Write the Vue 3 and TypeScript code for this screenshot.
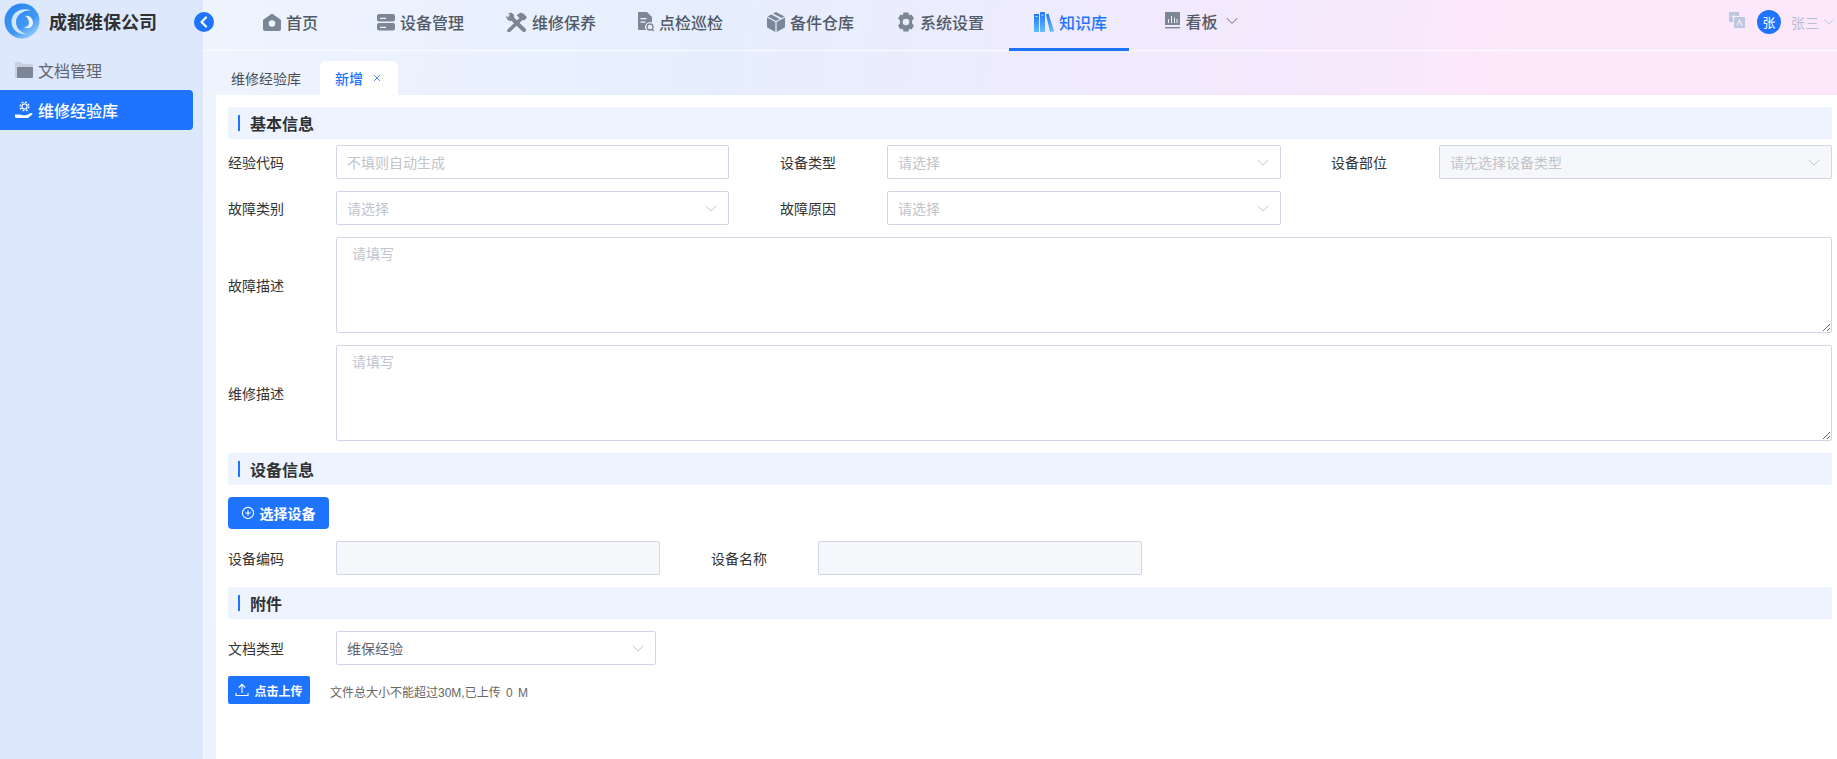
<script setup lang="ts">
interface NavItem { label: string; icon: string; active?: boolean; caret?: boolean }
const navItems: NavItem[] = [
  { label: '首页', icon: 'home' },
  { label: '设备管理', icon: 'server' },
  { label: '维修保养', icon: 'tools' },
  { label: '点检巡检', icon: 'doc' },
  { label: '备件仓库', icon: 'box' },
  { label: '系统设置', icon: 'gear' },
  { label: '知识库', icon: 'books', active: true },
  { label: '看板', icon: 'chart', caret: true },
]
</script>

<template>
  <div class="app">
    <aside class="sidebar">
      <div class="brand">
        <svg class="logo" viewBox="0 0 36 36" width="36" height="36">
          <defs>
            <linearGradient id="lg1" x1="0.1" y1="0.1" x2="0.8" y2="1">
              <stop offset="0" stop-color="#2b86f0" />
              <stop offset="0.6" stop-color="#3f97f4" />
              <stop offset="1" stop-color="#9ad2fb" />
            </linearGradient>
          </defs>
          <circle cx="18" cy="18" r="17.500" fill="url(#lg1)" />
          <path d="M27 7.500C19 4 7.500 8 7.500 19c0 8 7 13 15.500 12-6-1-11-6-11-12 0-7 7-12 15-11.500Z" fill="#cfe6fc" />
          <path d="M21 13c5-1 8 3 8 7s-5 7-9 4c3 .5 5-1 5-4 0-3-2-6-4-7Z" fill="#e8f3fe" />
        </svg>
        <span class="brand-name">成都维保公司</span>
      </div>
      <div class="side-item">
        <svg class="side-icon" viewBox="0 0 18 18" width="18" height="18">
          <path d="M0 2a1 1 0 0 1 1-1h5l2 2h9a1 1 0 0 1 1 1v12a1 1 0 0 1-1 1H1a1 1 0 0 1-1-1Z" fill="#c9d1de" />
          <path d="M2 7a1 1 0 0 1 1-1h14a1 1 0 0 1 1 1v9a1 1 0 0 1-1 1H3a1 1 0 0 1-1-1Z" fill="#7b8696" />
        </svg>
        <span>文档管理</span>
      </div>
      <div class="side-item side-active">
        <svg class="side-icon" viewBox="0 0 18 18" width="18" height="18">
          <circle cx="9.500" cy="5.500" r="2.600" fill="none" stroke="#fff" stroke-width="1.200" />
          <circle cx="9.500" cy="5.500" r="4.400" fill="none" stroke="#fff" stroke-width="1.300" stroke-dasharray="1.800 1.650" />
          <path d="M0 13.500h5c1 0 2 .8 3.500.8H11l5-2.300c1-.4 2 .6 1.200 1.400L13 17H3l-3-.5Z" fill="#fff" />
        </svg>
        <span>维修经验库</span>
      </div>
    </aside>

    <div class="collapse-btn">
      <svg viewBox="0 0 20 20" width="20" height="20">
        <path d="M12 5.500 7.500 10l4.500 4.500" fill="none" stroke="#fff" stroke-width="2.200" stroke-linecap="round" stroke-linejoin="round" />
      </svg>
    </div>

    <div class="right">
      <header class="header">
        <nav class="nav">
          <div v-for="item in navItems" :key="item.label" class="nav-item" :class="{ active: item.active, raised: item.caret }">
            <svg v-if="item.icon === 'home'" class="nav-icon" viewBox="0 0 18 18" width="18" height="18">
              <path fill-rule="evenodd" d="M9 .5 17.500 6.500a1 1 0 0 1 .5 1V16a2 2 0 0 1-2 2H2a2 2 0 0 1-2-2V7.500a1 1 0 0 1 .5-1ZM9 7.200a3.300 3.300 0 1 0 0 6.600 3.300 3.300 0 0 0 0-6.600Z" fill="#7b8696" />
            </svg>
            <svg v-else-if="item.icon === 'server'" class="nav-icon" viewBox="0 0 18 18" width="18" height="18">
              <rect x="0" y="1" width="18" height="7.400" rx="2" fill="#7b8696" />
              <rect x="0" y="10" width="18" height="7.400" rx="2" fill="#7b8696" />
              <rect x="3" y="4.800" width="6" height="1.200" fill="#eef3ff" />
              <rect x="3" y="13.800" width="6" height="1.200" fill="#eef3ff" />
            </svg>
            <svg v-else-if="item.icon === 'tools'" class="nav-icon" viewBox="0 0 22 20" width="22" height="20">
              <path d="M5.500 5 19 18" stroke="#7b8696" stroke-width="4" stroke-linecap="round" />
              <path d="M1 3.500 3.800 6 6 4 3.300 1.200C5 .2 7.500.6 8.500 2.300c.8 1.300.7 3-.2 4.200L6 9C4 9.300 1.200 7.500 1 3.500Z" fill="#7b8696" />
              <path d="M17 6 4 18.500" stroke="#7b8696" stroke-width="3.600" stroke-linecap="round" />
              <path d="M11.500 3.500 15 .8c1.800-.4 3.600.6 4.500 2l1.800 1.700.7 1-3.200 3.200-1.500-1.300-1.300.4-3-3.300Z" fill="#7b8696" />
            </svg>
            <svg v-else-if="item.icon === 'doc'" class="nav-icon" viewBox="0 0 16 20" width="16" height="20">
              <path d="M1 0h8l5 5v5.500a5 5 0 0 0-6 7.500H1a1 1 0 0 1-1-1V1a1 1 0 0 1 1-1Z" fill="#7b8696" />
              <rect x="2.500" y="6" width="6" height="1.300" fill="#eef3ff" />
              <rect x="2.500" y="9.500" width="5" height="1.300" fill="#eef3ff" />
              <circle cx="12" cy="15" r="3" fill="none" stroke="#7b8696" stroke-width="1.300" />
              <path d="m14.200 17.200 1.600 1.800" stroke="#7b8696" stroke-width="1.300" />
            </svg>
            <svg v-else-if="item.icon === 'box'" class="nav-icon" viewBox="0 0 18 20" width="18" height="20">
              <path d="M9 0 17.500 4.500 14.600 6 6 1.600Z" fill="#7b8696" />
              <path d="M4.300 2.500 12.800 7 9 9 .5 4.500Z" fill="#7b8696" />
              <path d="M0 5.600 8.400 10v10L1 16a2 2 0 0 1-1-1.600Z" fill="#7b8696" />
              <path d="M18 5.600 9.600 10v10l7.400-4a2 2 0 0 0 1-1.600Z" fill="#7b8696" />
            </svg>
            <svg v-else-if="item.icon === 'gear'" class="nav-icon" viewBox="0 0 18 20" width="18" height="20">
              <path fill-rule="evenodd" d="M6.500.5h5l.7 2.700 2.300-.8 2.500 4.100-2 1.900a6 6 0 0 1 0 3.200l2 1.900-2.500 4.100-2.300-.8-.7 2.700h-5l-.7-2.700-2.300.8L1 13.500l2-1.900a6 6 0 0 1 0-3.200L1 6.500l2.500-4.100 2.300.8ZM9 6.700a3.300 3.300 0 1 0 0 6.600 3.300 3.300 0 0 0 0-6.600Z" fill="#7b8696" />
            </svg>
            <svg v-else-if="item.icon === 'books'" class="nav-icon" viewBox="0 0 20 20" width="20" height="20">
              <defs>
                <linearGradient id="bk" x1="0" y1="0" x2="0" y2="1">
                  <stop offset="0" stop-color="#1f74ff" />
                  <stop offset="1" stop-color="#66bdf7" />
                </linearGradient>
              </defs>
              <rect x="0" y="2" width="5" height="18" fill="url(#bk)" />
              <rect x="6" y="0" width="5" height="20" rx="1" fill="url(#bk)" />
              <path d="M12 2.500 14.500 1.500 20 19.200 16 20Z" fill="url(#bk)" />
              <rect x="1.500" y="4" width="2" height="1" fill="#dfe9ff" />
              <rect x="7.500" y="2.500" width="2" height="1" fill="#dfe9ff" />
            </svg>
            <svg v-else class="nav-icon" viewBox="0 0 15 17" width="15" height="17">
              <rect x="0" y="0" width="15" height="13" fill="#7b8696" />
              <path d="M3.500 11V7M6.500 11V4M9.500 11V5.500M12 11V7" stroke="#eef0fc" stroke-width="1" />
              <rect x="0" y="15" width="15" height="1.400" fill="#7b8696" />
            </svg>
            <span>{{ item.label }}</span>
            <svg v-if="item.caret" class="nav-caret" viewBox="0 0 12 8" width="12" height="8">
              <path d="M.7 1 6 6.500 11.300 1" fill="none" stroke="#6b7280" stroke-width="1" />
            </svg>
          </div>
        </nav>
        <div class="user">
          <svg class="lang" viewBox="0 0 16 16" width="16" height="16">
            <path d="M1 0h8a1 1 0 0 1 1 1v3H6a2 2 0 0 0-2 2v4H1a1 1 0 0 1-1-1V1a1 1 0 0 1 1-1Z" fill="#bcc8de" />
            <rect x="5" y="5" width="11" height="11" rx="1" fill="#bcc8de" />
            <path d="M8 13.500 10.500 8 13 13.500" fill="none" stroke="#fde7fb" stroke-width="1.100" />
            <path d="M2.500 4.500h5M5 2.500v4" stroke="#fde7fb" stroke-width="1.100" />
          </svg>
          <span class="avatar">张</span>
          <span class="user-name">张三</span>
          <svg viewBox="0 0 10 6" width="10" height="6">
            <path d="M.5.700 5 5 9.500.700" fill="none" stroke="#bcc8de" stroke-width="1" />
          </svg>
        </div>
      </header>

      <div class="tabs">
        <div class="tab first-tab">维修经验库</div>
        <div class="tab tab-active">
          <span>新增</span>
          <svg viewBox="0 0 8 8" width="8" height="8">
            <path d="m1 1 6 6M7 1 1 7" stroke="#5a8fe8" stroke-width="1" />
          </svg>
        </div>
      </div>

      <main class="content">
        <div class="section"><i class="mark"></i>基本信息</div>

        <div class="grid3 first">
          <div class="field">
            <label class="lbl">经验代码</label>
            <input class="ctl" type="text" placeholder="不填则自动生成" />
          </div>
          <div class="field">
            <label class="lbl">设备类型</label>
            <div class="ctl select"><span class="ph">请选择</span><svg viewBox="0 0 12 7" width="12" height="7"><path d="M.5.700 6 6 11.500.700" fill="none" stroke="#c0c6d2" stroke-width="1" /></svg></div>
          </div>
          <div class="field">
            <label class="lbl">设备部位</label>
            <div class="ctl select disabled"><span class="ph">请先选择设备类型</span><svg viewBox="0 0 12 7" width="12" height="7"><path d="M.5.700 6 6 11.500.700" fill="none" stroke="#c0c6d2" stroke-width="1" /></svg></div>
          </div>
        </div>

        <div class="grid3">
          <div class="field">
            <label class="lbl">故障类别</label>
            <div class="ctl select"><span class="ph">请选择</span><svg viewBox="0 0 12 7" width="12" height="7"><path d="M.5.700 6 6 11.500.700" fill="none" stroke="#c0c6d2" stroke-width="1" /></svg></div>
          </div>
          <div class="field">
            <label class="lbl">故障原因</label>
            <div class="ctl select"><span class="ph">请选择</span><svg viewBox="0 0 12 7" width="12" height="7"><path d="M.5.700 6 6 11.500.700" fill="none" stroke="#c0c6d2" stroke-width="1" /></svg></div>
          </div>
        </div>

        <div class="field">
          <label class="lbl">故障描述</label>
          <textarea class="area" placeholder="请填写"></textarea>
        </div>
        <div class="field">
          <label class="lbl">维修描述</label>
          <textarea class="area" placeholder="请填写"></textarea>
        </div>

        <div class="section"><i class="mark"></i>设备信息</div>
        <button class="btn btn-select" type="button">
          <svg viewBox="0 0 14 14" width="14" height="14">
            <circle cx="7" cy="7" r="5.600" fill="none" stroke="#fff" stroke-width="1.100" />
            <path d="M4.300 7h5.400M7 4.300v5.400" stroke="#fff" stroke-width="1.100" />
          </svg>
          选择设备
        </button>
        <div class="grid2">
          <div class="field">
            <label class="lbl">设备编码</label>
            <div class="ctl disabled"></div>
          </div>
          <div class="field">
            <label class="lbl">设备名称</label>
            <div class="ctl disabled"></div>
          </div>
        </div>

        <div class="section"><i class="mark"></i>附件</div>
        <div class="field doc-type">
          <label class="lbl">文档类型</label>
          <div class="ctl select"><span class="val">维保经验</span><svg viewBox="0 0 12 7" width="12" height="7"><path d="M.5.700 6 6 11.500.700" fill="none" stroke="#c0c6d2" stroke-width="1" /></svg></div>
        </div>
        <div class="upload">
          <button class="btn btn-upload" type="button">
            <svg viewBox="0 0 14 14" width="14" height="14">
              <path d="M7 10V1.500M3.800 4.500 7 1.300l3.200 3.200M1 10v2.500h12V10" fill="none" stroke="#fff" stroke-width="1.100" />
            </svg>
            点击上传
          </button>
          <span class="tip">文件总大小不能超过30M,已上传 <span class="num">0</span> M</span>
        </div>
      </main>
    </div>
  </div>
</template>

<style>
html, body { margin: 0; padding: 0; }
</style>

<style scoped>
.app {
  position: relative;
  display: flex;
  width: 100%;
  height: 759px;
  overflow: hidden;
  font-family: "Noto Sans CJK SC", "Noto Sans", sans-serif;
  font-size: 14px;
  color: #333;
  background: linear-gradient(95deg, #f2f6ff 0, #e6eefd 38%, #f4e9fc 68%, #fde7fb 80%, #fde7fb 100%);
}
.sidebar {
  flex: none;
  width: 203px;
  background: #dde8fd;
  border-right: 1px solid #f4f7ff;
  box-sizing: content-box;
}
.brand {
  display: flex;
  align-items: center;
  gap: 9px;
  height: 42px;
  margin: 0 0 8px 0;
  padding-left: 4px;
}
.logo { flex: none; }
.brand-name {
  font-size: 18px;
  font-weight: 700;
  color: #303133;
  line-height: 42px;
}
.side-item {
  display: flex;
  align-items: center;
  gap: 5px;
  width: 193px;
  height: 40px;
  box-sizing: border-box;
  padding-left: 15px;
  font-size: 16px;
  color: #5f6570;
  border-radius: 0 4px 4px 0;
}
.side-active {
  background: #1f74ff;
  color: #fff;
  font-weight: 500;
}
.side-icon { flex: none; }
.collapse-btn {
  position: absolute;
  left: 194px;
  top: 12px;
  width: 20px;
  height: 20px;
  border-radius: 50%;
  background: #1f74ff;
}
.collapse-btn svg { display: block; }
.right {
  flex: 1;
  min-width: 0;
  display: flex;
  flex-direction: column;
}
.header {
  display: flex;
  justify-content: space-between;
  height: 50px;
  border-bottom: 1px solid #fbfcff;
}
.nav {
  display: flex;
  gap: 10px;
  margin-left: 26.500px;
  height: 51px;
}
.nav-item {
  display: flex;
  align-items: center;
  justify-content: center;
  gap: 5px;
  width: 120px;
  height: 51px;
  box-sizing: border-box;
  padding-bottom: 7px;
  font-size: 16px;
  font-weight: 500;
  color: #515a69;
}
.nav-item.raised { padding-bottom: 10px; padding-left: 2px; }
.nav-item.active {
  color: #1f74ff;
  border-bottom: 3px solid #1f74ff;
  padding-bottom: 4px;
  padding-left: 4px;
  margin-left: -2px;
  margin-right: 2px;
}
.nav-icon { flex: none; }
.nav-caret { margin-left: 3px; }
.user {
  display: flex;
  align-items: center;
  height: 44px;
  padding-right: 3px;
}
.lang { margin-right: 12px; margin-top: -4px; }
.avatar {
  width: 24px;
  height: 24px;
  line-height: 24px;
  border-radius: 50%;
  background: #1f74ff;
  color: #fff;
  text-align: center;
  font-size: 13px;
  margin-right: 10px;
}
.user-name { color: #b4bfd4; margin-right: 5px; }
.tabs {
  display: flex;
  align-items: flex-end;
  height: 44px;
  margin-left: 12px;
  box-sizing: border-box;
}
.tab {
  height: 34px;
  line-height: 34px;
  padding: 0 15px;
  color: #4a4f58;
}
.first-tab { padding-right: 19px; }
.tab-active {
  display: flex;
  align-items: center;
  gap: 10px;
  background: #fff;
  color: #1f74ff;
  font-weight: 500;
  border-radius: 6px 6px 0 0;
  padding-right: 17px;
}
.content {
  flex: 1;
  margin-left: 12px;
  padding: 12px 5px 0 12px;
  background: #fff;
  display: flex;
  flex-direction: column;
  gap: 12px;
}
.section {
  display: flex;
  align-items: center;
  height: 32px;
  background: #edf4ff;
  font-size: 16px;
  font-weight: 700;
  color: #303133;
}
.mark {
  width: 2px;
  height: 16px;
  margin: 0 10px;
  background: #1f74ff;
}
.grid3 {
  display: grid;
  grid-template-columns: 501px 502px 501px;
  column-gap: 50px;
}
.first { margin-top: -6px; }
.grid2 {
  display: grid;
  grid-template-columns: 432px 432px;
  column-gap: 50px;
}
.field {
  display: flex;
  align-items: center;
}
.lbl {
  flex: none;
  width: 108px;
  box-sizing: border-box;
  color: #333;
}
.grid3 .field:nth-child(2) .lbl,
.grid2 .field:nth-child(2) .lbl { padding-left: 1px; }
.ctl {
  flex: 1;
  min-width: 0;
  height: 34px;
  box-sizing: border-box;
  border: 1px solid #d0d6e6;
  border-radius: 2px;
  padding: 0 10px;
  font: inherit;
  color: #5f6570;
  background: #fff;
  outline: none;
}
.ctl::placeholder { color: #c0c4cc; }
.select {
  display: flex;
  align-items: center;
  justify-content: space-between;
  padding-right: 11px;
}
.select svg { flex: none; }
.ph { color: #c0c4cc; }
.val { color: #5f6570; }
.disabled { background: #f5f7fa; }
.area {
  flex: 1;
  display: block;
  height: 96px;
  box-sizing: border-box;
  border: 1px solid #d0d6e6;
  border-radius: 2px;
  padding: 4px 15px;
  font: inherit;
  line-height: 22px;
  background: #fff;
  outline: none;
  resize: vertical;
}
.area::placeholder { color: #c0c4cc; }
.btn {
  display: flex;
  align-items: center;
  justify-content: center;
  border: 0;
  background: #1f74ff;
  color: #fff;
  font-family: inherit;
  font-weight: 700;
  padding: 0;
}
.btn-select {
  width: 101px;
  height: 32px;
  gap: 5px;
  padding-right: 1px;
  border-radius: 4px;
  font-size: 14px;
}
.doc-type { width: 428px; }
.upload {
  display: flex;
  align-items: center;
  gap: 20px;
  margin-top: -1px;
}
.btn-upload {
  width: 82px;
  height: 28px;
  gap: 5px;
  border-radius: 2px;
  font-size: 12px;
}
.tip {
  font-family: "Liberation Sans", "Noto Sans CJK SC", sans-serif;
  font-size: 12px;
  color: #666;
  margin-top: 2px;
}
.num { margin: 0 2px; }
</style>
